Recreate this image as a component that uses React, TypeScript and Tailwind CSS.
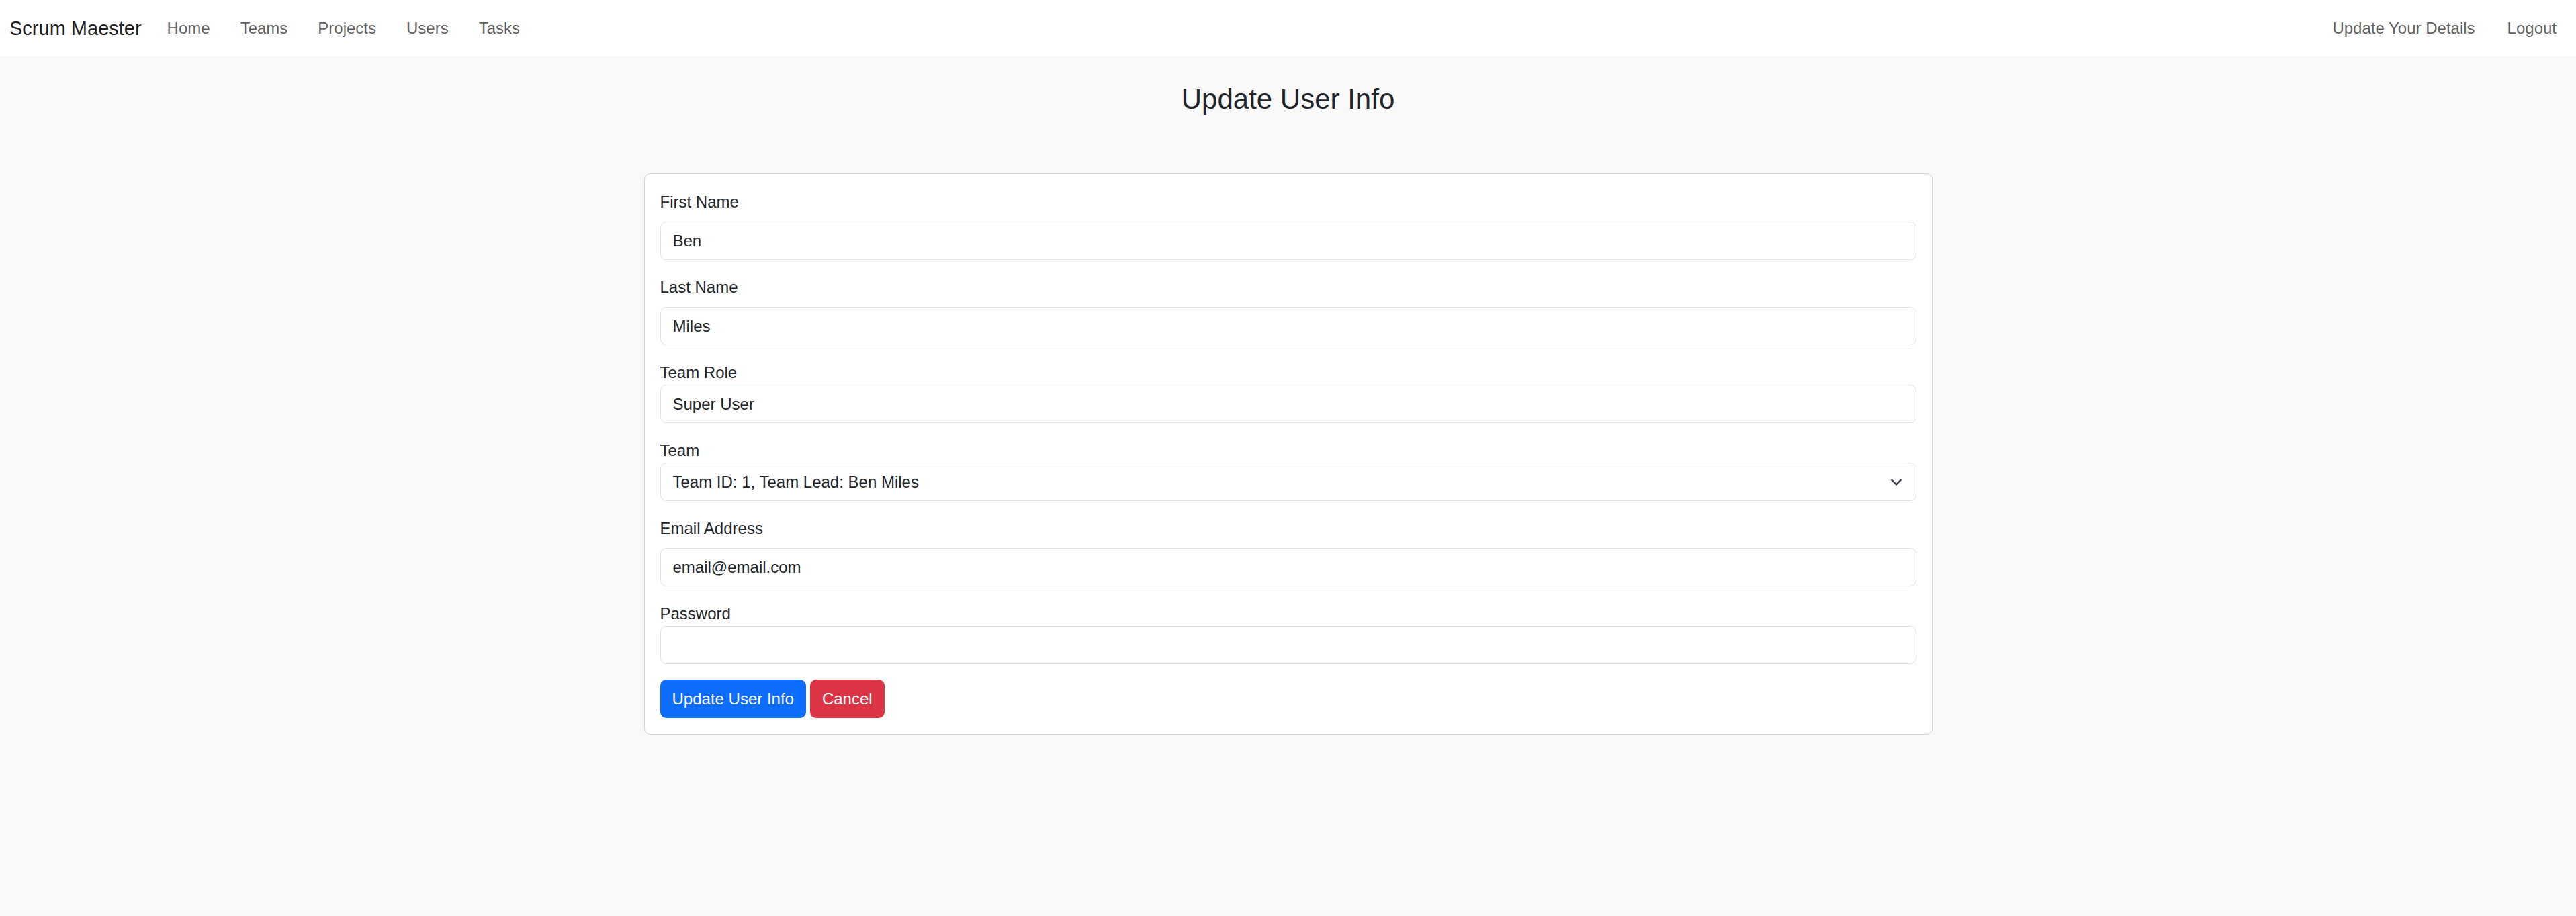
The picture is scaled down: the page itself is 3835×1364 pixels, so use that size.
import { useState } from "react";

const navLinks = ["Home", "Teams", "Projects", "Users", "Tasks"];

interface FieldProps {
  label: string;
  value: string;
  spaced?: boolean;
  type?: string;
}

function Field({ label, value, spaced = false, type = "text" }: FieldProps) {
  const [val, setVal] = useState(value);
  return (
    <div className="mb-[23px]">
      <label className={`block text-[24px] leading-[36px] text-[#212529] ${spaced ? "mb-[11px]" : ""}`}>
        {label}
      </label>
      <input
        type={type}
        value={val}
        onChange={(e) => setVal(e.target.value)}
        className="block w-full h-[57px] px-[18px] text-[24px] text-[#212529] bg-white border border-[#dee2e6] rounded-[9px] outline-none"
      />
    </div>
  );
}

export default function App() {
  return (
    <div className="min-h-screen bg-[#f9f9fa] font-['Liberation_Sans',Arial,sans-serif]">
      {/* Navbar */}
      <nav className="h-[84px] bg-white flex items-center justify-between pl-[14px] pr-[29px]">
        <div className="flex items-center">
          <a className="text-[29px] text-black/90 leading-none">Scrum Maester</a>
          <ul className="flex items-center gap-[45px] ml-[38px]">
            {navLinks.map((l) => (
              <li key={l} className="text-[24px] text-black/65">
                {l}
              </li>
            ))}
          </ul>
        </div>
        <ul className="flex items-center gap-[48px]">
          <li className="text-[24px] text-black/65">Update Your Details</li>
          <li className="text-[24px] text-black/65">Logout</li>
        </ul>
      </nav>

      <main className="pt-[39px]">
        <h3 className="text-center text-[42px] leading-[50px] font-medium text-[#212529] mb-[85px]">
          Update User Info
        </h3>

        <div className="w-[1918px] mx-auto bg-white border border-[#d3d3d4] rounded-[9px] pt-[24px] px-[23px] pb-[24px]">
          <Field label="First Name" value="Ben" spaced />
          <Field label="Last Name" value="Miles" spaced />
          <Field label="Team Role" value="Super User" />

          <div className="mb-[23px]">
            <label className="block text-[24px] leading-[36px] text-[#212529]">Team</label>
            <div className="relative">
              <select className="block w-full h-[57px] pl-[18px] pr-[54px] text-[24px] text-[#212529] bg-white border border-[#dee2e6] rounded-[9px] appearance-none outline-none">
                <option>Team ID: 1, Team Lead: Ben Miles</option>
              </select>
              <svg
                className="absolute right-[21px] top-1/2 -translate-y-1/2 w-[18px] h-[18px] pointer-events-none"
                viewBox="0 0 16 16"
                fill="none"
              >
                <path d="m2 5 6 6 6-6" stroke="#343a40" strokeWidth="2" strokeLinecap="round" strokeLinejoin="round" />
              </svg>
            </div>
          </div>

          <Field label="Email Address" value="email@email.com" spaced />
          <Field label="Password" value="" type="password" />

          <div className="flex items-center gap-[6px]">
            <button className="h-[57px] px-[18px] text-[24px] text-white bg-[#0d6efd] rounded-[9px]">
              Update User Info
            </button>
            <button className="h-[57px] px-[18px] text-[24px] text-white bg-[#dc3545] rounded-[9px]">
              Cancel
            </button>
          </div>
        </div>
      </main>
    </div>
  );
}
